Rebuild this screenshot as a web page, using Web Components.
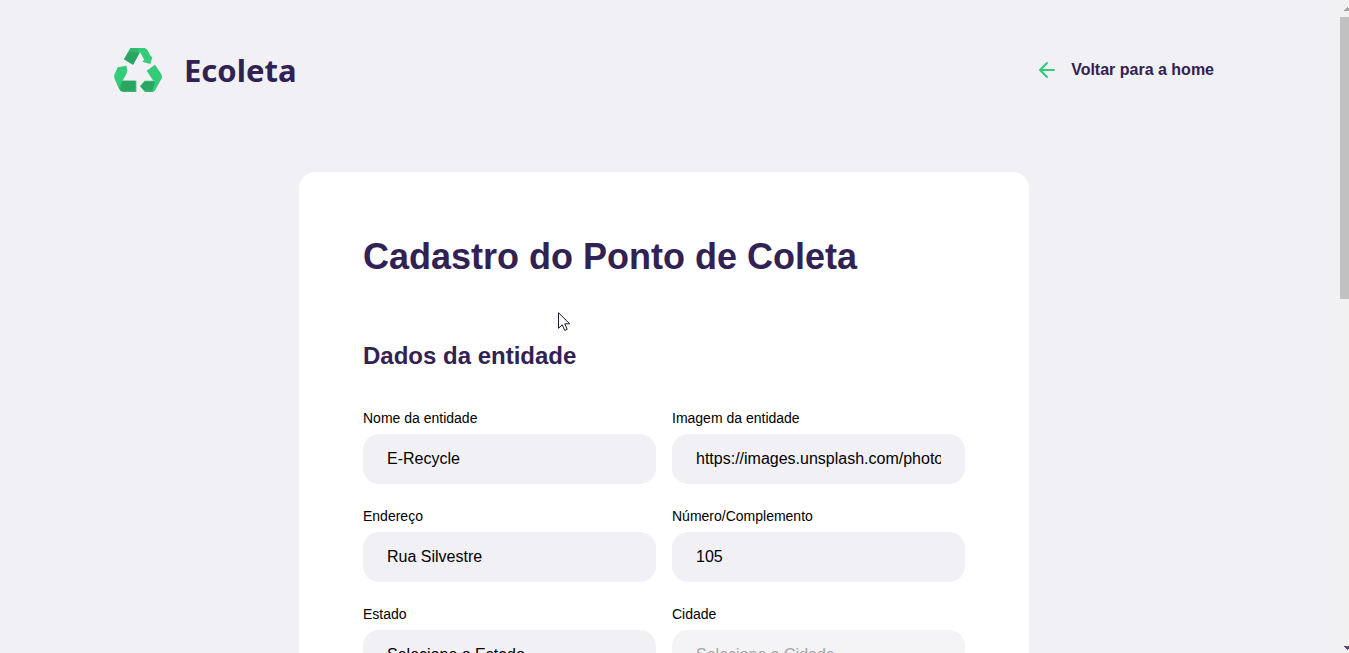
<!DOCTYPE html>
<html lang="pt-BR">
<head>
<meta charset="utf-8">
<title>Ecoleta</title>
<style>
  body { margin: 0; background: #f0f0f5; color: #000; font-family: "Liberation Sans", Arial, sans-serif; -webkit-font-smoothing: antialiased; }
</style>
</head>
<body>
<eco-app>
  <eco-header></eco-header>
  <eco-card heading="Cadastro do Ponto de Coleta">
    <eco-fieldset legend="Dados da entidade">
      <eco-input label="Nome da entidade" name="name" value="E-Recycle"></eco-input>
      <eco-input label="Imagem da entidade" name="image" value="https://images.unsplash.com/photo-1528323273322"></eco-input>
      <eco-input label="Endereço" name="address" value="Rua Silvestre"></eco-input>
      <eco-input label="Número/Complemento" name="address2" value="105"></eco-input>
      <eco-select label="Estado" name="uf" placeholder="Selecione o Estado"></eco-select>
      <eco-select label="Cidade" name="city" placeholder="Selecione a Cidade" disabled></eco-select>
    </eco-fieldset>
  </eco-card>
  <eco-cursor></eco-cursor>
</eco-app>

<script>
class EcoElement extends HTMLElement {
  connectedCallback() {
    if (this.shadowRoot) return;
    this.attachShadow({ mode: "open" }).innerHTML = this.render();
  }
  attr(name) { return this.getAttribute(name) || ""; }
}

customElements.define("eco-app", class extends EcoElement {
  render() {
    return `
    <style>
      :host { display: flex; height: 100vh; position: relative; overflow: hidden; }
      main { flex: 1; min-width: 0; box-sizing: border-box; padding: 48px 11px 48px 0; overflow-y: auto; scrollbar-width: none; }
      .page { width: 100%; max-width: 1100px; margin: 0 auto; }
    </style>
    <main><div class="page"><slot></slot></div></main>
    <eco-scrollbar></eco-scrollbar>`;
  }
});

customElements.define("eco-scrollbar", class extends EcoElement {
  render() {
    return `
    <style>
      :host { display: flex; flex-direction: column; flex: none; width: 10px; background: #f1f1f1; overflow: hidden; }
      svg { display: block; flex: none; width: 17px; height: 17px; }
      .track { flex: 1; padding-left: 1px; }
      .thumb { height: 45.6%; background: #c1c1c1; }
    </style>
    <svg viewBox="0 0 17 17" shape-rendering="crispEdges"><path d="M8 7h1v1h1v1h1v1h1v1H5v-1h1V9h1V8h1z" fill="#a3a3a3"/></svg>
    <div class="track"><div class="thumb"></div></div>
    <svg viewBox="0 0 17 17" shape-rendering="crispEdges"><path d="M5 10h7v1h-1v1h-1v1H9v1H8v-1H7v-1H6v-1H5z" fill="#61496b"/></svg>`;
  }
});

customElements.define("eco-header", class extends EcoElement {
  render() {
    return `
    <style>
      :host { display: block; margin-bottom: 80px; }
      header { display: flex; align-items: center; justify-content: space-between; height: 44px; }
      a { display: flex; align-items: center; text-decoration: none; color: #322153; font-weight: bold; }
      svg { display: block; flex: none; }
      .back { gap: 12px; font-size: 16px; line-height: 18px; }
    </style>
    <header>
      <eco-logo></eco-logo>
      <a class="back" href="#home">
        <svg width="24" height="24" viewBox="0 0 24 24" fill="none" stroke="#34cb79" stroke-width="2" stroke-linecap="round" stroke-linejoin="round" aria-hidden="true"><path d="M19 12H5M12 19l-7-7 7-7"/></svg>
        <span>Voltar para a home</span>
      </a>
    </header>`;
  }
});

customElements.define("eco-logo", class extends EcoElement {
  render() {
    return `
    <style>
      :host { display: flex; align-items: center; gap: 22px; color: #322153; font: bold 31px/44px "Noto Sans", sans-serif; }
      svg { display: block; flex: none; }
    </style>
    <svg width="48" height="44" viewBox="27 24 144 132" aria-hidden="true">
      <path d="M76 24H119Q125 26 129 33L137 49L142 51L136 72L112 65L118 59L101 29Z" fill="#34cb79"/>
      <path d="M76 24H98L105 36L84 74L57 58Z" fill="#2fb86e"/>
      <path d="M72 35L104 38L84 74L57 58Z" fill="#2ba562"/>
      <path d="M48 122H94V156H53Q46 155 43 148L35 130Z" fill="#2fb86e"/>
      <path d="M51 122H90V152H46Z" fill="#2ba562"/>
      <path d="M38 82L64 77L67 92L64 102L44 138L41 143L29 117Q26 110 29 103Z" fill="#34cb79"/>
      <path d="M105 139L119 122H152L144 156H120Z" fill="#2fb86e"/>
      <path d="M107 139L119 126H150L142 151H118Z" fill="#2ba562"/>
      <path d="M125 92L150 74L169 103Q173 110 169 117L149 153L141 156L151 122L145 122Z" fill="#34cb79"/>
    </svg>
    <span>Ecoleta</span>`;
  }
});

customElements.define("eco-card", class extends EcoElement {
  render() {
    return `
    <style>
      :host { display: block; box-sizing: border-box; max-width: 730px; margin: 0 auto; padding: 64px; background: #fff; border-radius: 16px; }
      h1 { margin: 0 0 64px; font-size: 36px; line-height: 42px; color: #322153; }
    </style>
    <form><h1>${this.attr("heading")}</h1><slot></slot></form>`;
  }
});

customElements.define("eco-fieldset", class extends EcoElement {
  render() {
    return `
    <style>
      :host { display: block; }
      h2 { margin: 0 0 40px; font-size: 24px; line-height: 28px; color: #322153; }
      .fields { display: grid; grid-template-columns: repeat(2, minmax(0, 1fr)); gap: 24px 16px; }
    </style>
    <section aria-labelledby="t"><h2 id="t">${this.attr("legend")}</h2><div class="fields"><slot></slot></div></section>`;
  }
});

const fieldStyles = `
  :host { display: flex; flex-direction: column; gap: 8px; }
  label { font-size: 14px; line-height: 16px; }
  input, select {
    box-sizing: border-box; width: 100%; height: 50px; margin: 0; padding: 0 24px;
    border: 0; border-radius: 16px; outline: 0; appearance: none;
    background: #f0f0f5; color: #000; font: 16px "Liberation Sans", Arial, sans-serif;
  }
  select { padding-bottom: 2px; }
  select:disabled { background: #f4f4f7; color: #a6a3a3; opacity: 1; }
`;

customElements.define("eco-input", class extends EcoElement {
  render() {
    return `<style>${fieldStyles}</style>
    <label for="f">${this.attr("label")}</label>
    <input id="f" type="text" name="${this.attr("name")}" value="${this.attr("value")}">`;
  }
});

customElements.define("eco-select", class extends EcoElement {
  render() {
    return `<style>${fieldStyles}</style>
    <label for="f">${this.attr("label")}</label>
    <select id="f" name="${this.attr("name")}"${this.hasAttribute("disabled") ? " disabled" : ""}><option value="0">${this.attr("placeholder")}</option></select>`;
  }
});

customElements.define("eco-cursor", class extends EcoElement {
  render() {
    return `
    <style>
      :host { position: absolute; left: 558px; top: 312px; pointer-events: none; }
      svg { display: block; }
    </style>
    <svg width="13" height="20" viewBox="0 0 13 20" aria-hidden="true"><path d="M.5.7V16.3L4.2 12.8L6.7 18.4L9.2 17.3L6.8 11.8H11.6Z" fill="#fff" stroke="#1c1338"/></svg>`;
  }
});
</script>
</body>
</html>
